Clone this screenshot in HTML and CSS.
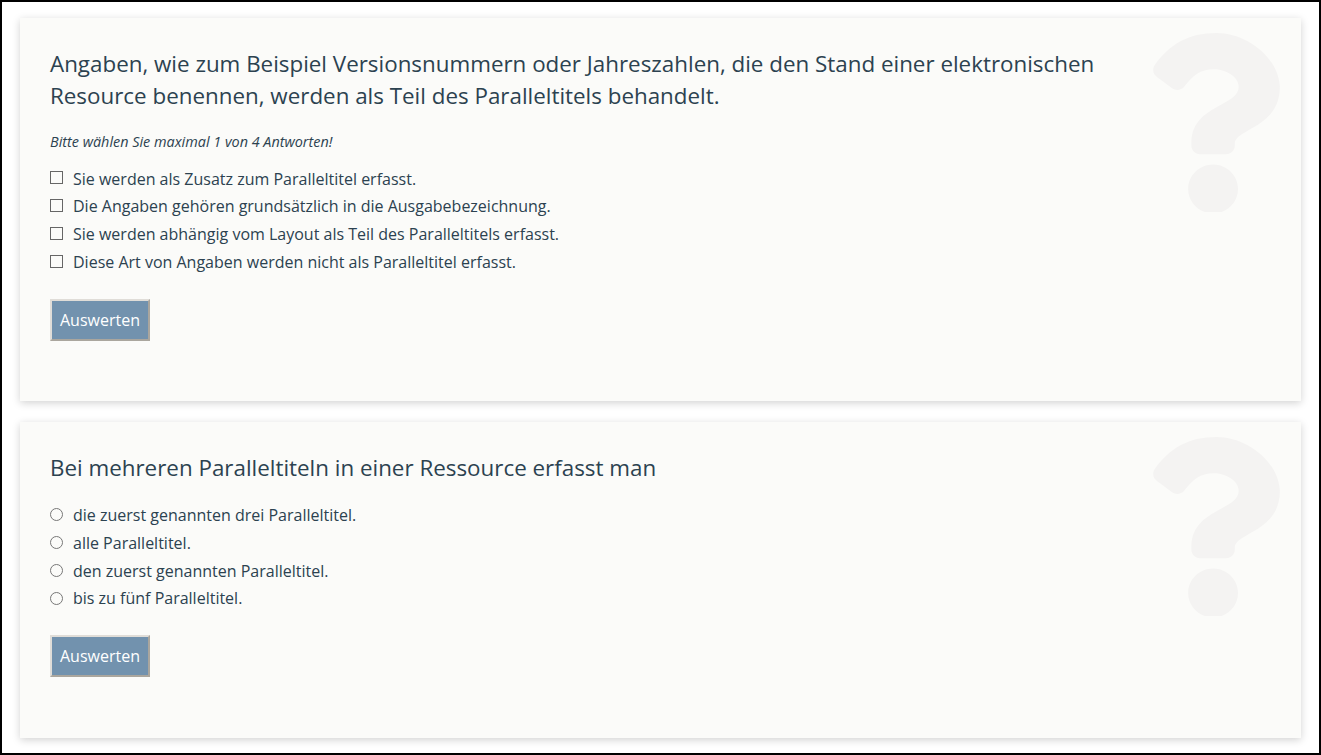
FILE: index.html
```html
<!DOCTYPE html>
<html lang="de">
<head>
<meta charset="utf-8">
<title>Quiz</title>
<link rel="stylesheet" href="styles.css">
</head>
<body>
<main class="frame">
  <section class="card card-multi">
    <svg class="mark" viewBox="0 0 384 508" preserveAspectRatio="none" aria-hidden="true"><path d="M202.021 0C122.202 0 70.503 32.703 29.914 91.026c-7.363 10.58-5.093 25.086 5.178 32.874l43.138 32.709c10.373 7.865 25.132 6.026 33.253-4.148 25.049-31.381 43.63-49.449 82.757-49.449 30.764 0 68.816 19.799 68.816 49.631 0 22.552-18.617 34.134-48.993 51.164-35.423 19.86-82.299 44.576-82.299 106.405V320c0 13.255 10.745 24 24 24h72.471c13.255 0 24-10.745 24-24v-5.773c0-42.86 125.268-44.645 125.268-160.627C373.504 66.256 282.808 0 202.021 0zM192 373.459c-38.196 0-69.271 31.075-69.271 69.271 0 38.195 31.075 69.27 69.271 69.27s69.271-31.075 69.271-69.271-31.075-69.27-69.271-69.27z"/></svg>
    <h2 class="question">Angaben, wie zum Beispiel Versionsnummern oder Jahreszahlen, die den Stand einer elektronischen Resource benennen, werden als Teil des Paralleltitels behandelt.</h2>
    <p class="hint">Bitte wählen Sie maximal 1 von 4 Antworten!</p>
    <ul class="answers">
      <li class="answer"><input type="checkbox" id="a1"><label for="a1">Sie werden als Zusatz zum Paralleltitel erfasst.</label></li>
      <li class="answer"><input type="checkbox" id="a2"><label for="a2">Die Angaben gehören grundsätzlich in die Ausgabebezeichnung.</label></li>
      <li class="answer"><input type="checkbox" id="a3"><label for="a3">Sie werden abhängig vom Layout als Teil des Paralleltitels erfasst.</label></li>
      <li class="answer"><input type="checkbox" id="a4"><label for="a4">Diese Art von Angaben werden nicht als Paralleltitel erfasst.</label></li>
    </ul>
    <button class="submit" type="button">Auswerten</button>
  </section>
  <section class="card card-single">
    <svg class="mark" viewBox="0 0 384 508" preserveAspectRatio="none" aria-hidden="true"><path d="M202.021 0C122.202 0 70.503 32.703 29.914 91.026c-7.363 10.58-5.093 25.086 5.178 32.874l43.138 32.709c10.373 7.865 25.132 6.026 33.253-4.148 25.049-31.381 43.63-49.449 82.757-49.449 30.764 0 68.816 19.799 68.816 49.631 0 22.552-18.617 34.134-48.993 51.164-35.423 19.86-82.299 44.576-82.299 106.405V320c0 13.255 10.745 24 24 24h72.471c13.255 0 24-10.745 24-24v-5.773c0-42.86 125.268-44.645 125.268-160.627C373.504 66.256 282.808 0 202.021 0zM192 373.459c-38.196 0-69.271 31.075-69.271 69.271 0 38.195 31.075 69.27 69.271 69.27s69.271-31.075 69.271-69.271-31.075-69.27-69.271-69.27z"/></svg>
    <h2 class="question">Bei mehreren Paralleltiteln in einer Ressource erfasst man</h2>
    <ul class="answers">
      <li class="answer"><input type="radio" name="b" id="b1"><label for="b1">die zuerst genannten drei Paralleltitel.</label></li>
      <li class="answer"><input type="radio" name="b" id="b2"><label for="b2">alle Paralleltitel.</label></li>
      <li class="answer"><input type="radio" name="b" id="b3"><label for="b3">den zuerst genannten Paralleltitel.</label></li>
      <li class="answer"><input type="radio" name="b" id="b4"><label for="b4">bis zu fünf Paralleltitel.</label></li>
    </ul>
    <button class="submit" type="button">Auswerten</button>
  </section>
</main>
</body>
</html>
```
FILE: styles.css
```css
* { box-sizing: border-box; }
html, body { margin: 0; height: 100%; }
body {
  background: #fff;
  color: #2c4250;
  font-family: "Open Sans", sans-serif;
  font-size: 16px;
  overflow: hidden;
}
.frame {
  height: 755px;
  border: 2px solid #000;
  padding: 16px 18px;
  display: flex;
  flex-direction: column;
  gap: 21px;
}
.card {
  position: relative;
  flex: none;
  padding: 30px 30px 0;
  background: #fbfbf9;
  box-shadow: 0 2px 8px rgba(0, 0, 0, .18);
}
.card-multi { height: 383px; }
.card-single { height: 316px; }
.mark {
  position: absolute;
  top: 15px;
  right: 18.6px;
  width: 138.2px;
  height: 179px;
  fill: #f4f3f2;
}
.card-single .mark { top: 14.5px; }
.question {
  position: relative;
  margin: 0;
  max-width: 1080px;
  font-size: 22.38px;
  font-weight: 400;
  line-height: 32px;
}
.hint {
  position: relative;
  margin: 18px 0 0;
  font-size: 14.4px;
  font-style: italic;
  line-height: 24px;
}
.answers {
  position: relative;
  list-style: none;
  margin: 10.75px 0 0;
  padding: 0;
}
.card-single .answers { margin-top: 17.25px; }
.answer {
  display: flex;
  align-items: center;
  height: 27.75px;
  line-height: 24px;
}
.answer input {
  flex: none;
  appearance: none;
  width: 13px;
  height: 13px;
  margin: 0 10px 1.5px 0;
  background: #fbfbf9;
  border: 1px solid #666;
}
.answer input[type="radio"] {
  margin-bottom: .5px;
  border-radius: 50%;
  border-color: #777;
}
.submit {
  position: relative;
  display: block;
  width: 100px;
  height: 42px;
  margin-top: 23px;
  padding: 0;
  background: #7292ae;
  color: #fff;
  font: 16px "Open Sans", sans-serif;
  border: 2px solid;
  border-color: #e0ddd8 #aaa69e #aaa69e #e0ddd8;
}
```
